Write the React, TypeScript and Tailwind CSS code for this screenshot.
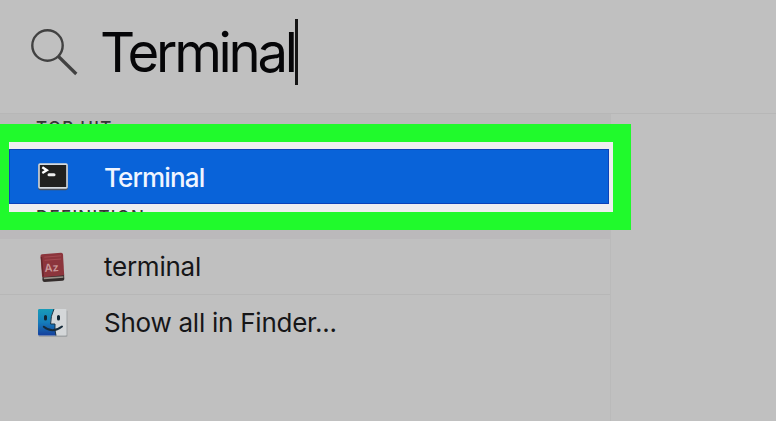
function SearchIcon() {
  return (
    <svg className="h-[50px] w-[50px]" viewBox="0 0 50 50" fill="none" stroke="#414141">
      <circle cx="17.5" cy="17.5" r="15.2" strokeWidth="2.4" />
      <path d="M28.5 28.5L46.3 46" strokeWidth="3.2" />
    </svg>
  );
}

function TerminalIcon() {
  return (
    <svg className="mt-px h-7 w-8" viewBox="0 0 32 28">
      <rect x="1.2" y=".8" width="29.6" height="26.5" rx="2" fill="#4b5361" />
      <rect x="1.2" y=".3" width="29.6" height="25.5" rx="1.8" fill="#d4dae0" />
      <rect x="2.8" y="2" width="26.4" height="22" fill="#20201f" />
      <path d="M5.3 4.2L9.8 7.2L5.3 10" fill="none" stroke="#fff" strokeWidth="2.4" />
      <path d="M12 11.7H17" stroke="#eee" strokeWidth="3" strokeLinecap="round" />
    </svg>
  );
}

function DictionaryIcon() {
  return (
    <svg className="h-8 w-8" viewBox="0 0 32 32">
      <path d="M5.5 25L27 23.5L27.3 28Q27.3 29.6 25.5 29.8L7.5 31Q5.6 31 5.4 29Z" fill="#332c2b" />
      <path d="M6.6 26.6L26.4 25.2V26.8L7 28.3Z" fill="#999088" />
      <path d="M3.5 5.2Q3.4 3.5 5 3.3L24 1.8Q25.8 1.7 26 3.3L27.2 24.2L6.2 26.2Q5.1 26.2 5 25Z" fill="#8c353c" />
      <path d="M4.4 6L6.2 25.5" stroke="#64252a" strokeWidth="1.4" />
      <path d="M7.3 6.2L24 4.8M7.6 9.3L24.2 8" stroke="#a34a50" strokeWidth="1" />
      <text x="7.5" y="20.5" transform="rotate(-4 16 16)" fill="#c99a9b" className="font-['Inter',sans-serif] text-[11px] font-semibold">Az</text>
    </svg>
  );
}

function FinderIcon() {
  return (
    <svg className="h-[30px] w-8" viewBox="0 0 32 30">
      <defs>
        <linearGradient id="finder-blue" x1="0" y1="0" x2="0" y2="1">
          <stop offset="0" stopColor="#189bb8" />
          <stop offset=".5" stopColor="#157dbb" />
          <stop offset="1" stopColor="#153f9d" />
        </linearGradient>
      </defs>
      <rect x="1.5" y="2" width="29" height="27" rx="1.5" fill="#a1a4a6" />
      <rect x="1" y="1" width="28.5" height="26.5" rx="1.2" fill="#d4d7d9" />
      <path d="M1 2.2Q1 1 2.2 1H17Q13.5 8 13.6 16H18Q17.4 22 19 27.5H2.2Q1 27.5 1 26.3Z" fill="url(#finder-blue)" />
      <path d="M17 1Q13.5 8 13.6 16H18Q17.4 22 19 27.5" fill="none" stroke="#183143" strokeWidth="1" />
      <path d="M8.5 8.5V11M21.5 8.5V11" stroke="#122532" strokeWidth="3" strokeLinecap="round" />
      <path d="M6.8 18.7Q15.5 25.8 25 18.5" fill="none" stroke="#162b3b" strokeWidth="2" strokeLinecap="round" />
    </svg>
  );
}

export default function App() {
  return (
    <main className="relative flex h-[421px] w-[776px] flex-col overflow-hidden bg-[#c0c0c0] font-['Inter','Liberation_Sans',sans-serif] text-[#161618]">
      <header className="flex h-[114px] shrink-0 border-b border-[#b7b7b7] pl-[30px] pt-7">
        <SearchIcon />
        <div className="ml-[20px] -mt-7 flex h-[104px] items-center">
          <span className="block w-[195px] whitespace-nowrap text-[54.5px] leading-none tracking-[-3.3px] text-[#060608]">Terminal</span>
          <span className="h-[66px] w-[2.5px] bg-[#151515]" />
        </div>
      </header>
      <div className="flex min-h-0 flex-1">
        <section className="w-[611px] shrink-0 border-r border-[#bababa]">
          <h2 className="h-[35px] bg-[#bbbbbb] pl-9 pt-1 text-[17px] font-medium leading-[20px] tracking-[1.3px] text-[#353535]">
            <span className="relative z-10">TOP HIT</span>
          </h2>
          <div className="relative z-30 ml-[9px] flex h-[55px] w-[600px] items-center border border-[#0b42b9] bg-[#0963d9] pl-[27px] text-[#f0f5ff]">
            <TerminalIcon />
            <span className="ml-[35px] mt-0.5 whitespace-nowrap text-[26px] font-medium leading-none tracking-[-0.85px]">Terminal</span>
          </div>
          <h2 className="h-[35px] bg-[#bbb9bb] pl-9 pt-[3px] text-[17px] font-medium leading-[20px] tracking-[1.3px] text-[#353535]">
            <span className="relative z-10">DEFINITION</span>
          </h2>
          <div className="flex h-14 items-center border-b border-[#b7b7b7] pl-[37px]">
            <DictionaryIcon />
            <span className="ml-[35px] whitespace-nowrap text-[26px] leading-none tracking-[-0.25px]">terminal</span>
          </div>
          <div className="flex h-14 items-center pl-[37px]">
            <FinderIcon />
            <span className="ml-[35px] whitespace-nowrap text-[26px] leading-none tracking-[-0.25px]">Show all in Finder...</span>
          </div>
        </section>
        <aside className="flex-1" />
      </div>
      {/* Bright panel behind the highlighted result, with its frame above the labels */}
      <div className="absolute left-[9px] top-[142px] z-0 h-[70px] w-[604px] bg-[#eeeef0]" />
      <div className="absolute left-0 top-[124px] z-20 h-[106px] w-[631px] border-y-[18px] border-l-[9px] border-r-[18px] border-[#20fa2c]" />
    </main>
  );
}
